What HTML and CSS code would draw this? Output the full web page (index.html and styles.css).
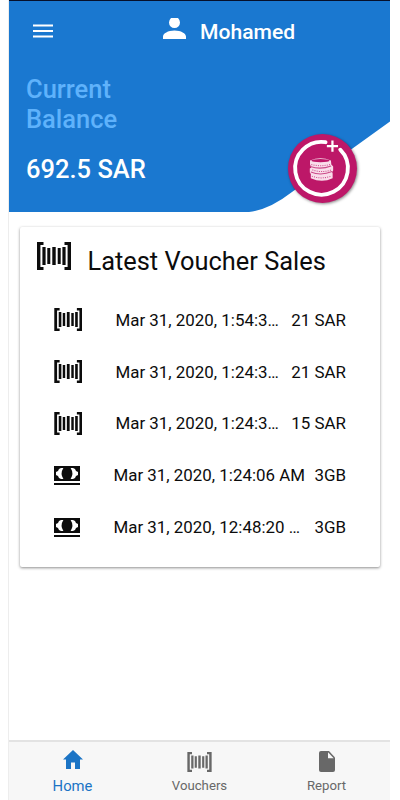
FILE: index.html
```html
<!DOCTYPE html>
<html lang="en">
<head>
  <meta charset="UTF-8">
  <meta name="viewport" content="width=device-width, initial-scale=1">
  <title>Home</title>
  <link rel="stylesheet" href="styles.css">
</head>
<body>
  <!-- Shared icons -->
  <svg class="icon-defs" xmlns="http://www.w3.org/2000/svg">
    <symbol id="barcode" viewBox="0 0 34 28">
      <path fill="currentColor" d="M0 0h6.500v3H3.400v22h3.100V28H0zM34 0h-6.500v3h3.100v22h-3.100V28h6.500zM5.400 5h3.200v18H5.400zM10.300 6h3v16h-3zM15.300 5h3.400v18h-3.400zM20.700 6h3v16h-3zM25.400 5h3.200v18h-3.200z"/>
    </symbol>
    <symbol id="cash" viewBox="0 0 26 19">
      <path fill="currentColor" d="M0 0h26v15H0zM0 17h26v2H0z"/>
      <path fill="#fff" d="M9.400 2Q5.800 7.500 9.400 13H7L5 12 4 10 2 9V6L4 5 5 3 7 2zM16.600 2q3.600 5.500 0 11H19l2-1 1-2 2-1V6l-2-1-1-2-2-1z"/>
    </symbol>
  </svg>

  <div class="screen">
    <header class="hero">
      <svg class="hero-bg" viewBox="0 0 381 212" preserveAspectRatio="none">
        <path fill="#1a78d0" d="M0 0h381v121L283 192Q260 210 240 212H0z"/>
      </svg>
      <div class="toolbar">
        <svg class="menu-icon" viewBox="0 0 20 14">
          <path fill="currentColor" d="M0 .5h20v2H0zM0 6h20v2H0zM0 11.5h20v2H0z"/>
        </svg>
        <div class="user">
          <svg class="user-icon" viewBox="0 0 23 21">
            <path fill="currentColor" d="M8 0h7q2 2 2 4.600a5.500 5.500 0 0 1-11 0Q6 2 8 0zM11.500 12.500C18 12.500 23 15.500 23 18.500V21H0v-2.500c0-3 5-6 11.500-6z"/>
          </svg>
          <span>Mohamed</span>
        </div>
      </div>
      <div class="balance-label">Current<br>Balance</div>
      <div class="balance">692.5 SAR</div>

      <!-- Add credit button -->
      <button class="add-btn" aria-label="Add credit">
        <svg viewBox="0 0 68 68">
          <path class="ring" d="M37 8.100A26 26 0 1 0 51.500 15.500"/>
          <path class="plus" d="M43.800 6.500v11M38.300 12h11"/>
          <g class="coins">
            <path class="stack" d="M21.700 26q10.300-4 20.600 0l.4 4 1.800 2v4l-1 1.500.5 1.500v4.500q-10.500 5-21.500 0v-4l-1-1.500V34l1.500-1-1.300-3z"/>
            <ellipse class="top" cx="32" cy="26.300" rx="9" ry="1.600"/>
            <path class="gap" d="M22 32q10 3.500 20.500-.5M22.500 37.500q10 4 21-.5"/>
            <path class="ridges" d="M23 30q9 2.500 18.500 0M24 35.300q9 3.500 19 0M23.500 41.500q9 3.500 19 0"/>
          </g>
        </svg>
      </button>
    </header>

    <main class="content">
      <section class="card">
        <h1 class="card-title">
          <svg class="title-icon"><use href="#barcode"/></svg>
          <span>Latest Voucher Sales</span>
        </h1>
        <ul class="sales">
          <li>
            <svg class="barcode"><use href="#barcode"/></svg>
            <span class="date">Mar 31, 2020, 1:54:3…</span>
            <span class="amount">21 SAR</span>
          </li>
          <li>
            <svg class="barcode"><use href="#barcode"/></svg>
            <span class="date">Mar 31, 2020, 1:24:3…</span>
            <span class="amount">21 SAR</span>
          </li>
          <li>
            <svg class="barcode"><use href="#barcode"/></svg>
            <span class="date">Mar 31, 2020, 1:24:3…</span>
            <span class="amount">15 SAR</span>
          </li>
          <li>
            <svg class="cash"><use href="#cash"/></svg>
            <span class="date">Mar 31, 2020, 1:24:06 AM</span>
            <span class="amount">3GB</span>
          </li>
          <li>
            <svg class="cash"><use href="#cash"/></svg>
            <span class="date">Mar 31, 2020, 12:48:20 …</span>
            <span class="amount">3GB</span>
          </li>
        </ul>
      </section>
    </main>

    <nav class="tabs">
      <a class="tab active">
        <svg class="home-icon" viewBox="0 0 20 19">
          <path fill="currentColor" d="M10 0l10 9.500h-3V19h-5v-6.500H8V19H3V9.500H0z"/>
        </svg>
        <span>Home</span>
      </a>
      <a class="tab">
        <svg class="voucher-icon"><use href="#barcode"/></svg>
        <span>Vouchers</span>
      </a>
      <a class="tab">
        <svg class="report-icon" viewBox="0 0 16 21">
          <path fill="currentColor" d="M2 0h8l6 6.500V19a2 2 0 0 1-2 2H2a2 2 0 0 1-2-2V2a2 2 0 0 1 2-2z"/>
          <path fill="#f7f7f7" d="M9 1.300V7.300h5.700z"/>
        </svg>
        <span>Report</span>
      </a>
    </nav>
  </div>
</body>
</html>
```
FILE: styles.css
```css
* {
  margin: 0;
  padding: 0;
  box-sizing: border-box;
}

body {
  background-color: #fff;
  color: #0c0c0c;
  font-family: Roboto, "Liberation Sans", sans-serif;
}

svg {
  display: block;
  flex: none;
}

.icon-defs {
  display: none;
}

.screen {
  display: flex;
  flex-direction: column;
  height: 800px;
  margin: 0 10px 0 9px;
  box-shadow: -1px 0 0 #ededed;
}

/* Hero */
.hero {
  position: relative;
  height: 212px;
  color: #fff;
  border-top: 1px solid #06102a;
}

.hero-bg {
  position: absolute;
  top: 0;
  left: 0;
  width: 100%;
  height: 211px;
  z-index: -1;
}

.toolbar {
  display: flex;
  align-items: center;
  height: 60px;
  padding-left: 24px;
}

.menu-icon {
  width: 20px;
  height: 14px;
}

.user {
  display: flex;
  align-items: center;
  gap: 14px;
  margin-left: 110px;
  font-size: 21.1px;
  font-weight: 500;
}

.user-icon {
  width: 23px;
  height: 21px;
  margin-bottom: 6px;
}

.balance-label {
  margin: 13px 0 0 17px;
  color: #5fb2fb;
  font-size: 25.5px;
  font-weight: 500;
  line-height: 30px;
}

.balance {
  margin: 20px 0 0 17px;
  font-size: 25.5px;
  font-weight: 500;
  line-height: 30px;
}

.add-btn {
  position: absolute;
  left: 279px;
  top: 133px;
  width: 69px;
  height: 69px;
  border: none;
  border-radius: 50%;
  background-color: #bd1768;
  box-shadow: 1px 1px 3px rgba(0, 0, 0, 0.45);
}

.add-btn .ring,
.add-btn .plus {
  fill: none;
  stroke: #fff;
}

.add-btn .ring {
  stroke-width: 3.8;
  stroke-linecap: round;
}

.add-btn .plus {
  stroke-width: 2.2;
}

.coins .stack {
  fill: #f9dcea;
}

.coins .top {
  fill: #bd1768;
}

.coins .gap,
.coins .ridges {
  fill: none;
  stroke: #cb4a89;
  stroke-width: 1;
}

.coins .ridges {
  stroke-dasharray: 1 1.2;
}

/* Latest sales card */
.content {
  flex: 1;
  padding: 15px 10px 0 11px;
}

.card {
  height: 340px;
  border-radius: 2px;
  background-color: #fff;
  box-shadow: 0 1px 3px rgba(0, 0, 0, 0.45);
}

.card-title {
  display: flex;
  align-items: center;
  height: 67px;
  padding-left: 16.5px;
  gap: 17px;
  font-size: 25.4px;
  font-weight: 400;
}

.title-icon {
  width: 34px;
  height: 28px;
  margin-bottom: 10px;
}

.sales {
  list-style: none;
}

.sales li {
  display: flex;
  align-items: center;
  height: 51.8px;
  padding: 0 34px 0 33.5px;
  font-size: 16.9px;
}

.sales .barcode {
  width: 28.5px;
  height: 23px;
  margin-right: 33.5px;
}

.sales .cash {
  width: 26px;
  height: 19px;
  margin-right: 34px;
}

.sales .amount {
  margin-left: auto;
}

/* Bottom tabs */
.tabs {
  display: flex;
  height: 60px;
  border-top: 2px solid #e3e3e3;
  background-color: #f7f7f7;
}

.tab {
  display: flex;
  flex: 1;
  flex-direction: column;
  align-items: center;
  justify-content: flex-end;
  padding-bottom: 5px;
  color: #686868;
  font-size: 13.2px;
  line-height: 18px;
}

.tab svg {
  margin-bottom: 5px;
}

.tab.active {
  color: #1b74c5;
  font-size: 14.8px;
}

.tab .home-icon {
  width: 20px;
  height: 19px;
  margin-bottom: 8px;
}

.voucher-icon {
  width: 25px;
  height: 20px;
}

.report-icon {
  width: 16px;
  height: 21px;
}
```
